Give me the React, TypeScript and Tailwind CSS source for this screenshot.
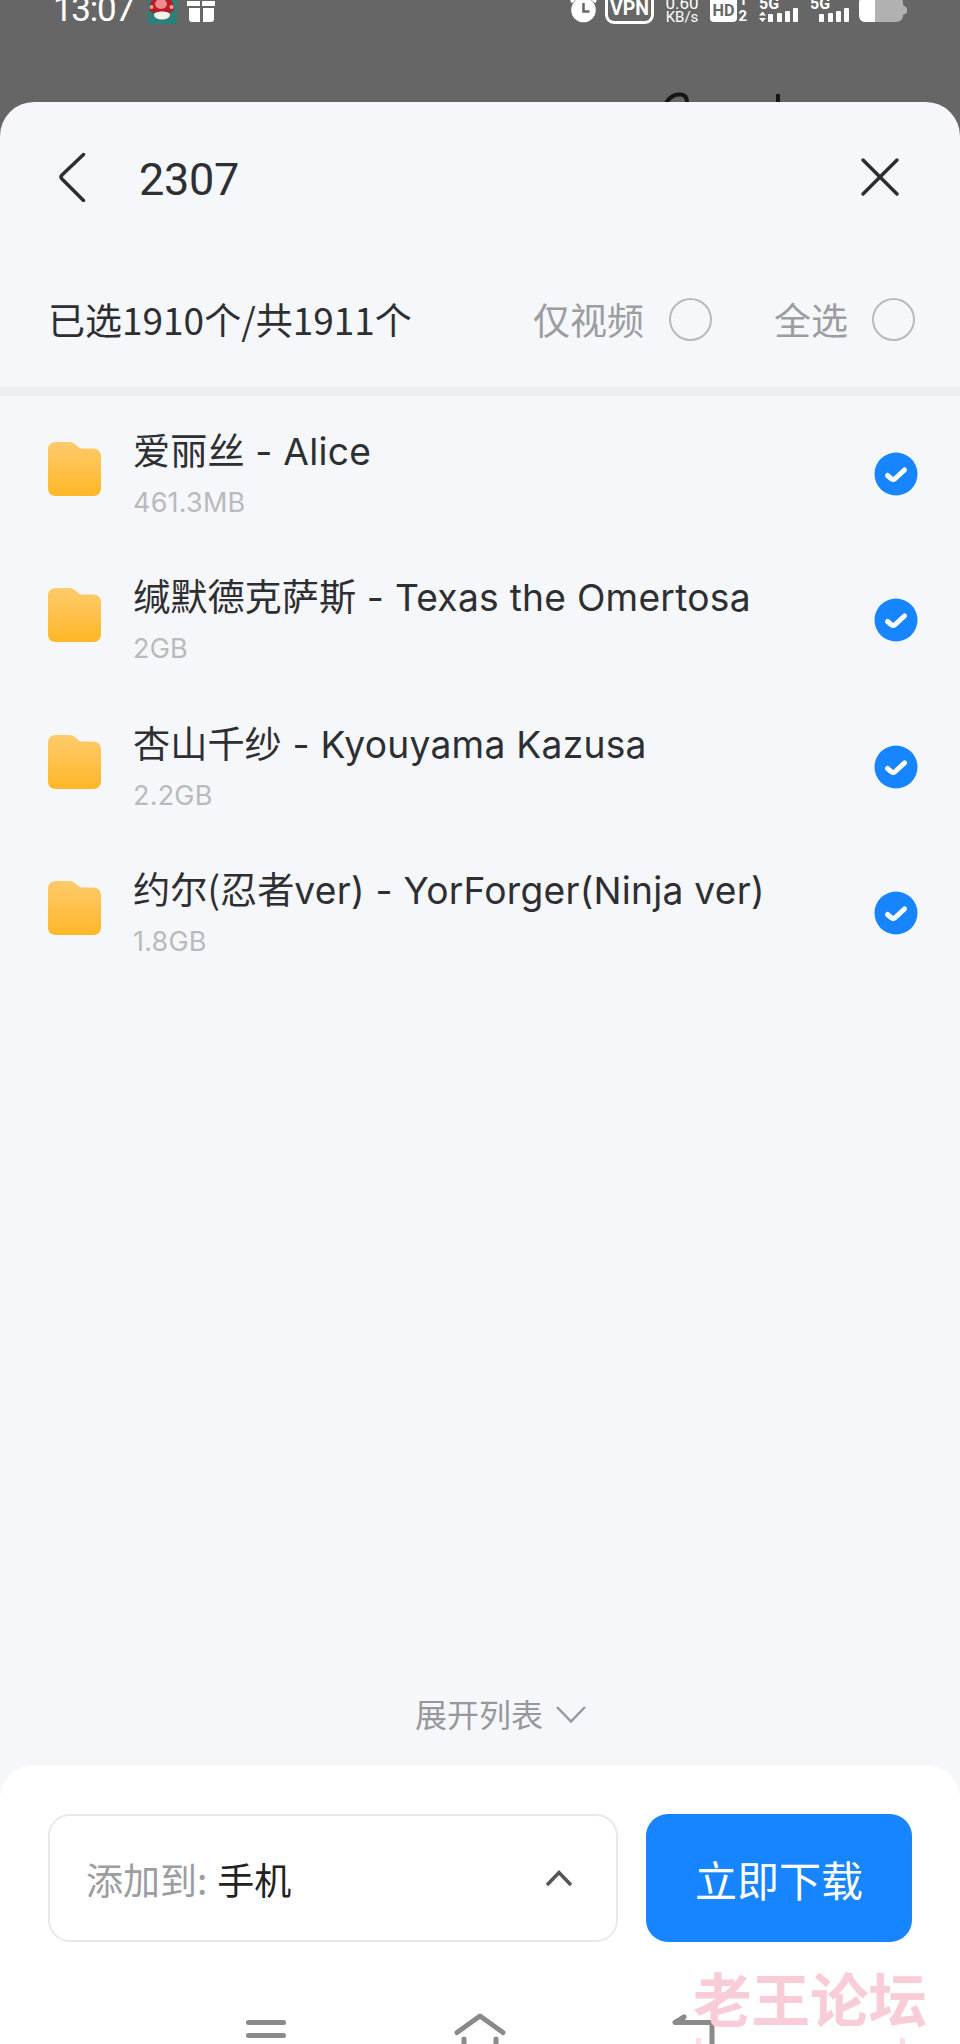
type Folder = {
  cn: string;
  name: string;
  size: string;
};

const folders: Folder[] = [
  { cn: "爱丽丝", name: " - Alice", size: "461.3MB" },
  { cn: "缄默德克萨斯", name: " - Texas the Omertosa", size: "2GB" },
  { cn: "杏山千纱", name: " - Kyouyama Kazusa", size: "2.2GB" },
  { cn: "约尔(忍者", name: "ver) - YorForger(Ninja ver)", size: "1.8GB" },
];

const Signal = ({ arrows }: { arrows?: boolean }) => (
  <svg width="42" height="24" viewBox="0 0 42 24" fill="#fff">
    <text x="0" y="9" fontSize="16" fontWeight="700" fontFamily="Roboto, sans-serif">
      5G
    </text>
    {arrows && <path d="M0 15.5l3.5-4 3.5 4zM0 18l3.5 4 3.5-4z" />}
    <rect x="9" y="14" width="5" height="8" rx="1" />
    <rect x="18" y="13" width="5" height="9" rx="1" />
    <rect x="26" y="11" width="5" height="11" rx="1" />
    <rect x="34" y="8" width="5" height="14" rx="1" />
  </svg>
);

const StatusBar = () => (
  <div className="flex h-6 items-start overflow-hidden pl-[53px] text-white">
    <span className="-mt-[10px] w-[95px] text-[35px] leading-[39px] tracking-[-1.3px]">13:07</span>
    <svg width="29" height="24" viewBox="0 0 29 24">
      <rect width="29" height="24" fill="#2b817a" />
      <ellipse cx="14" cy="15" rx="8" ry="4.5" fill="#f3f3ee" />
      <path d="M1 8C1 1 7-3 14-3s12 4 12 11c0 3-3 5-5 5-4-2-10-2-14 0-3 0-6-2-6-5z" fill="#b81c26" />
      <ellipse cx="13" cy="4" rx="6" ry="5" fill="#f08a8c" />
      <circle cx="3.500" cy="7" r="2" fill="#e9a6a0" />
      <circle cx="23.500" cy="7" r="2" fill="#e9a6a0" />
    </svg>
    <svg className="ml-2.5" width="30" height="24" viewBox="0 0 30 24" fill="#fff">
      <path d="M0 1h13v5H0zM15 1h13v5H15zM2 8h11v14H5c-2 0-3-1-3-3zM16 8h11v11c0 2-1 3-3 3h-8z" />
    </svg>
    <svg className="ml-[353px]" width="28" height="24" viewBox="0 0 28 24" fill="none">
      <path d="M1 2l6-5M26 2l-6-5" stroke="#fff" strokeWidth="3" />
      <circle cx="13.500" cy="10" r="12.300" fill="#fff" />
      <path d="M13.500 3v8.500h6" stroke="#666" strokeWidth="2.500" />
    </svg>
    <div className="-mt-2 ml-[7px] flex h-8 w-[49px] items-end justify-center rounded-[9px] border-[3px] border-white pb-0.5 text-[19.500px] leading-[20px] font-bold">
      VPN
    </div>
    <div className="-mt-[4px] ml-[11px] flex w-[34px] flex-col items-center text-[15px] leading-[14px]">
      <span className="text-[17px]">0.60</span>
      <span>KB/s</span>
    </div>
    <svg className="ml-[11px]" width="39" height="24" viewBox="0 0 39 24" fontFamily="Roboto, sans-serif" fontWeight="700">
      <rect y="-5" width="27" height="27" rx="4" fill="#fff" />
      <text x="2.500" y="16" fontSize="17" fill="#666" textLength="22" lengthAdjust="spacingAndGlyphs">
        HD
      </text>
      <text x="29" y="5" fontSize="14" fill="#fff">
        1
      </text>
      <text x="28.500" y="21" fontSize="15" fill="#fff">
        2
      </text>
    </svg>
    <div className="ml-[10px] flex gap-[9px]">
      <Signal arrows />
      <Signal />
    </div>
    <svg className="ml-[7px]" width="50" height="24" viewBox="0 0 50 24">
      <path d="M16-4h20c6 0 8 3 8 7v2l4 3v5l-4 2c0 4-2 7-8 7H16z" fill="#b1b1b1" />
      <path d="M16-4H6c-4 0-6 3-6 7v12c0 4 2 7 6 7h10z" fill="#fff" />
    </svg>
  </div>
);

const FolderIcon = () => (
  <svg width="54" height="54" viewBox="0 0 54 54" fill="none">
    <defs>
      <linearGradient id="folder" x1="0" y1="0" x2="0" y2="1">
        <stop offset="0" stopColor="#fecb6c" />
        <stop offset="1" stopColor="#ffb727" />
      </linearGradient>
    </defs>
    <path
      d="M0 8c0-5 3-8 8-8h13c3 0 5 1 7 3l3 2.500c1 .8 2 1 4 1h10c5 0 8 3 8 8V46c0 5-3 8-8 8H8c-5 0-8-3-8-8z"
      fill="url(#folder)"
    />
  </svg>
);

const Checked = () => (
  <svg width="44" height="44" viewBox="0 0 44 44" fill="none">
    <circle cx="22" cy="22" r="21.500" fill="#1785ff" />
    <path
      d="M13.500 23.500l4.200 3.500q1.500 1 3 0L30.500 18"
      stroke="#fff"
      strokeWidth="5"
      strokeLinecap="round"
      strokeLinejoin="round"
    />
  </svg>
);

const Radio = () => <span className="block size-[43px] rounded-full border-2 border-[#b9babd]" />;

const FolderRow = ({ cn, name, size }: Folder) => (
  <div className="flex h-[146.400px] items-start pr-[42px] pl-12">
    <div className="pt-[46px]">
      <FolderIcon />
    </div>
    <div className="ml-[31px] flex-1 pt-[27px] whitespace-pre">
      <div className="h-[52px] text-[37.200px] leading-[52px] text-[#2d2f33]">
        {cn}
        <span className="font-[Inter] tracking-[0.25px]">{name}</span>
      </div>
      <div className="mt-[10px] font-[Inter] text-[27px] leading-[36px] tracking-[0.2px] text-[#b9babd]">{size}</div>
    </div>
    <div className="pt-14">
      <Checked />
    </div>
  </div>
);

const App = () => {
  return (
    <div className="flex h-[2044px] w-[960px] flex-col overflow-hidden bg-[#666] font-[Roboto,'Noto_Sans_CJK_SC',sans-serif]">
      <StatusBar />
      {/* page behind the sheet peeks out above it */}
      <div className="flex h-[78px] items-end pl-[664px]">
        <svg width="120" height="10" viewBox="0 0 120 10" fill="none" stroke="#151515" strokeWidth="4">
          <path d="M2 11C6 4 12 2 17 2.500c5 .5 6 4 6 8M114 2v9" />
        </svg>
      </div>

      <div className="flex flex-1 flex-col rounded-t-[34px] bg-[#f6f7fb]">
        <div className="flex h-[150px] items-center pr-[60px] pl-[58px]">
          <svg width="30" height="50" viewBox="0 0 30 50" fill="none" stroke="#2d2f33" strokeWidth="3.500" strokeLinecap="round" strokeLinejoin="round">
            <path d="M25.500 2.500L4 23q-2 2 0 4l21.500 21.500" />
          </svg>
          <h1 className="ml-[51px] flex-1 pt-[5px] text-[45px] leading-none tracking-[-0.3px] text-[#2d2f33]">2307</h1>
          <svg width="40" height="40" viewBox="0 0 40 40" fill="none" stroke="#2d2f33" strokeWidth="3.500" strokeLinecap="round">
            <path d="M3 3l34 34M37 3L3 37" />
          </svg>
        </div>

        <div className="flex h-[135px] items-start pt-[46px] pr-[45px] pl-12 font-['Noto_Sans_CJK_SC',sans-serif] text-[37px] leading-[43px]">
          <div className="flex-1 text-[#2d2f33]">已选1910个/共1911个</div>
          <span className="mr-[25px] text-[#9b9da1]">仅视频</span>
          <Radio />
          <span className="mr-6 ml-[62px] text-[#9b9da1]">全选</span>
          <Radio />
        </div>
        <div className="h-[9px] bg-[#eeeff3]" />

        <div className="flex-1 font-['Noto_Sans_CJK_SC',sans-serif]">
          {folders.map((folder) => (
            <FolderRow key={folder.size} {...folder} />
          ))}
        </div>

        <div className="mb-[26px] flex h-12 items-center pl-[415px] text-[#96989d]">
          <span className="pt-0.5 text-[32px] leading-none">展开列表</span>
          <svg className="ml-3" width="32" height="20" viewBox="0 0 32 20" fill="none" stroke="currentColor" strokeWidth="2.500">
            <path d="M2 2l14 14.500L30 2" />
          </svg>
        </div>

        <div className="flex h-[279px] flex-col overflow-hidden rounded-t-[34px] bg-white">
          <div className="flex gap-7 pt-[49px] pl-12">
            <div className="flex h-32 w-[570px] items-center rounded-[22px] border-2 border-[#e8e8e9] pr-[43px] pl-9 font-['Noto_Sans_CJK_SC',sans-serif] text-[37px]">
              <span className="pt-[3px] text-[#9b9da1]">添加到:</span>
              <span className="ml-[10px] flex-1 pt-[3px] text-[#222]">手机</span>
              <svg width="28" height="18" viewBox="0 0 28 18" fill="none" stroke="#555" strokeWidth="3.500">
                <path d="M2 16L14 3.500 26 16" />
              </svg>
            </div>
            <button className="h-32 w-[266px] rounded-[22px] bg-[#1785ff] font-['Noto_Sans_CJK_SC',sans-serif] text-[42px] text-white">
              立即下载
            </button>
          </div>

          <div className="relative flex h-[102px] items-end pl-[246px]">
            <svg width="40" height="32" viewBox="0 0 40 32" fill="none" stroke="#8a8a8a" strokeWidth="5" strokeLinecap="round">
              <path d="M2.500 10.500h35M2.500 23.500h35" />
            </svg>
            <svg className="ml-[168px]" width="52" height="32" viewBox="0 0 52 32" fill="none" stroke="#8a8a8a" strokeWidth="5" strokeLinecap="round" strokeLinejoin="round">
              <path d="M3 20.500L26 4l23 16.500M10 27v8M42 27v8" />
            </svg>
            <svg className="ml-[166px]" width="44" height="32" viewBox="0 0 44 32" fill="none" stroke="#8a8a8a" strokeWidth="5" strokeLinejoin="round" strokeLinecap="round">
              <path d="M12 5L3 10.500h35q2 0 2 2V36" />
              <path d="M12 5L3 10.500h9z" fill="#8a8a8a" strokeWidth="2" />
            </svg>
            {/* forum watermark */}
            <div className="absolute top-[23px] left-[693px] text-[#f9cdd7]">
              <div className="h-[73px] font-['Noto_Sans_CJK_SC',sans-serif] text-[58.500px] leading-[64px] font-bold whitespace-nowrap">
                老王论坛
              </div>
              <div className="flex gap-[199px] pl-[3px]">
                <span className="h-2 w-[5px] bg-[#fbdfe5]" />
                <span className="h-2 w-[5px] bg-[#fbdfe5]" />
              </div>
            </div>
          </div>
        </div>
      </div>
    </div>
  );
};

export default App;
